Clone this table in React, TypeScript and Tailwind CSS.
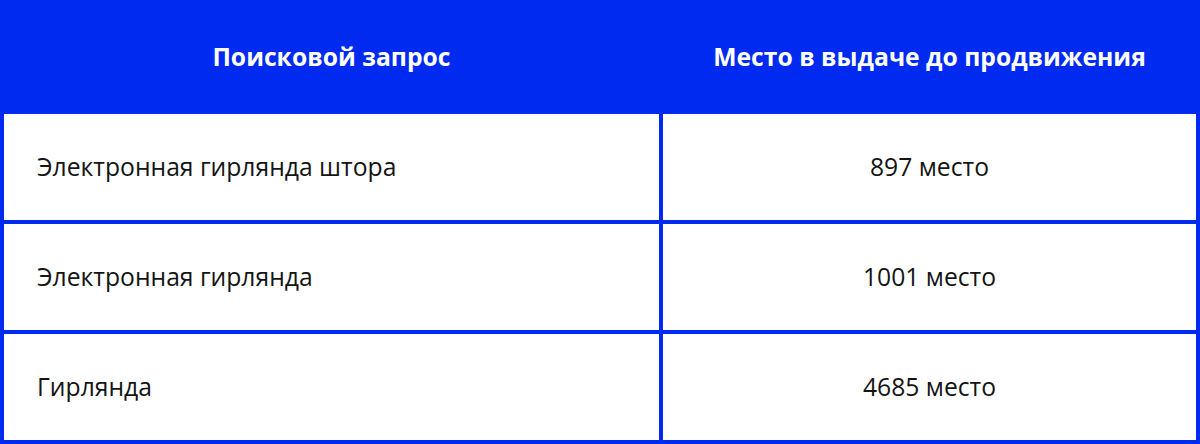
export default function App() {
  const rows = [
    ["Электронная гирлянда штора", "897 место"],
    ["Электронная гирлянда", "1001 место"],
    ["Гирлянда", "4685 место"],
  ];
  return (
    <div
      className="w-[1200px] h-[444px] bg-[#002af0] px-[4px] pb-[4px] grid grid-cols-[655px_533px] grid-rows-[110px_106px_106px_106px] gap-[4px]"
      style={{ fontFamily: '"Open Sans", sans-serif' }}
    >
      <div className="flex items-center justify-center pt-[4px] text-white font-bold text-[24.7px]">
        Поисковой запрос
      </div>
      <div className="flex items-center justify-center pt-[4px] text-white font-bold text-[24.7px]">
        Место в выдаче до продвижения
      </div>
      {rows.map(([a, b]) => (
        <>
          <div key={a} className="bg-white flex items-center pl-[33px] text-[24.7px] text-[#141414]">
            {a}
          </div>
          <div key={b} className="bg-white flex items-center justify-center text-[24.7px] text-[#141414]">
            {b}
          </div>
        </>
      ))}
    </div>
  );
}
